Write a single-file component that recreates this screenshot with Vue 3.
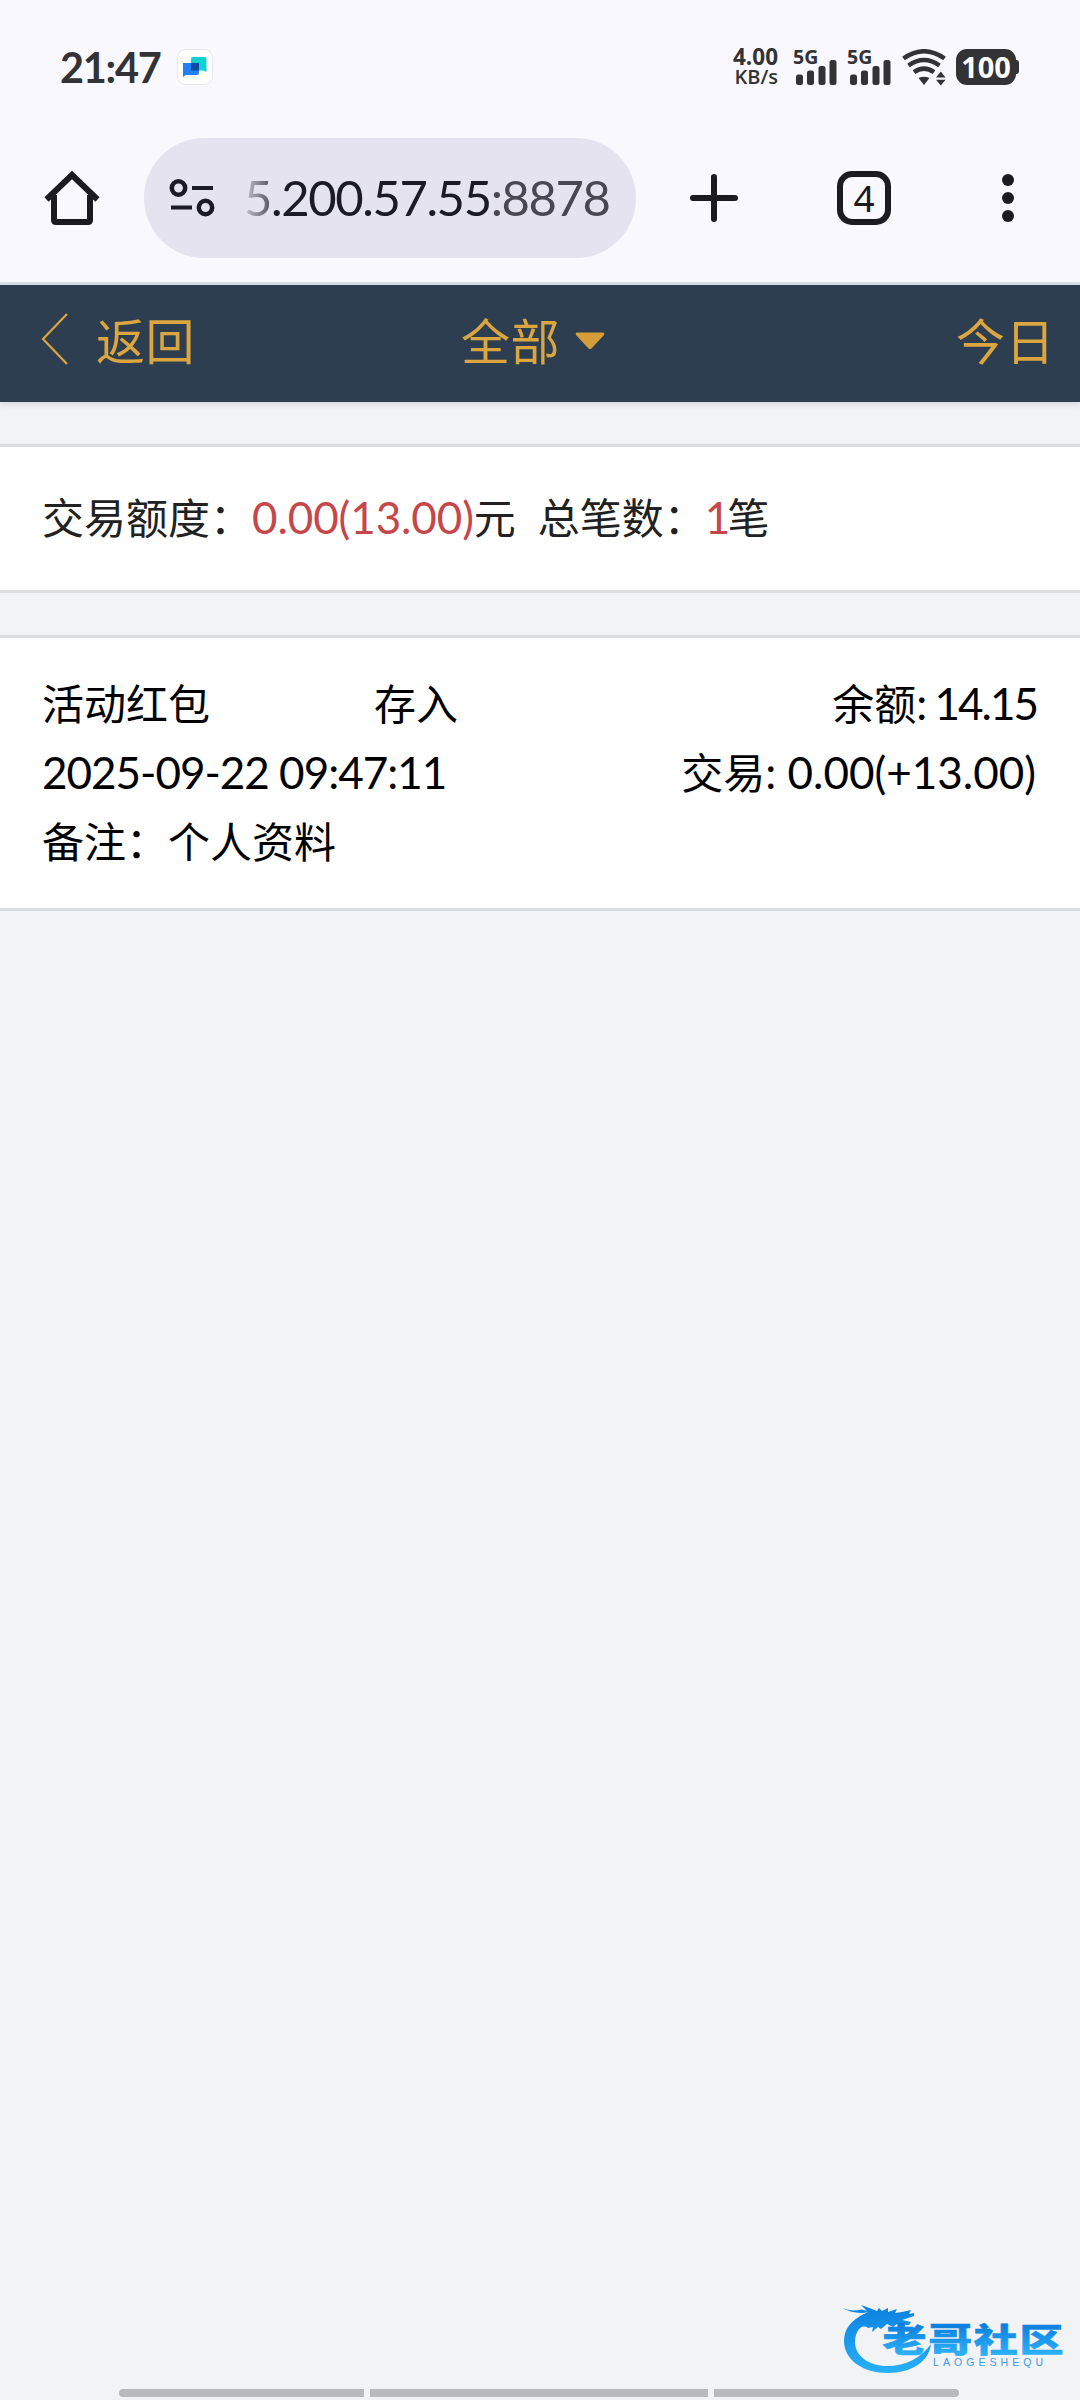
<script setup>
import { ref } from 'vue';

const signals = ['5G', '5G'];

const summary = ref({
  amount: '0.00(13.00)',
  count: 1,
});

const records = ref([
  {
    id: 1,
    type: '活动红包',
    action: '存入',
    balance: '14.15',
    time: '2025-09-22 09:47:11',
    trade: '0.00(+13.00)',
    remark: '个人资料',
  },
]);
</script>

<template>
  <div class="phone">
    <div class="status-bar">
      <span class="clock">21:47</span>
      <svg class="app-icon" width="36" height="36" viewBox="0 0 36 36">
        <rect x="0.5" y="0.5" width="35" height="35" rx="8" fill="#fff" stroke="#e6e6ec" />
        <path d="M16 8h11.500q2 0 2 2v13l-3-1.500H14V10q0-2 2-2z" fill="#12cfd0" />
        <path d="M6 14h16v10q0 2-2 2H8.500L6 28z" fill="#2080f6" />
        <path d="M14 14h8v7.500h-8z" fill="#0a4aa6" />
      </svg>
      <div class="net-speed">
        <span class="speed-num">4.00</span>
        <span class="speed-unit">KB/s</span>
      </div>
      <div v-for="(name, i) in signals" :key="i" class="signal">
        <span class="signal-name">{{ name }}</span>
        <svg class="signal-bars" width="41" height="26" viewBox="0 0 41 26" fill="#333336">
          <rect x="0" y="14.500" width="7" height="10.500" rx="2.500" />
          <rect x="11" y="10.500" width="7" height="14.500" rx="2.500" />
          <rect x="22.500" y="6" width="7" height="19" rx="2.500" />
          <rect x="33.500" y="0" width="7" height="25" rx="2.500" />
        </svg>
      </div>
      <svg class="wifi" width="45" height="37" viewBox="0 0 45 37" fill="none" stroke="#333336" stroke-width="4.500">
        <path d="M1.500 9.500Q22 -5 42.500 9.500" />
        <path d="M6.500 16.500Q22 5.500 37.500 16.500" />
        <path d="M12 23.200Q22 16 32 23.200" />
        <path d="M16.500 29Q22 26.500 27.500 29L22 36z" fill="#333336" stroke="none" />
        <path d="M34 28.500h9.500L38.800 22.500zM34 30.800h9.500L38.800 36.500z" fill="#333336" stroke="none" />
      </svg>
      <div class="battery"><span class="battery-num">100</span></div>
    </div>

    <div class="toolbar">
      <svg class="home" width="56" height="56" viewBox="0 0 56 56" fill="none" stroke="#1b1b21" stroke-width="6">
        <path d="M10 25v25q0 2 2 2h32q2 0 2-2V25" />
        <path d="M2.500 29.500L28 5l25.500 24.500" />
      </svg>
      <div class="url-box">
        <svg class="tune" width="46" height="40" viewBox="0 0 46 40" fill="none" stroke="#1b1b28">
          <circle cx="9.500" cy="10" r="6.700" stroke-width="4.500" />
          <circle cx="36.500" cy="29.500" r="6.700" stroke-width="4.500" />
          <path d="M23 10h21M2 29.500h21" stroke-width="4.200" />
        </svg>
        <div class="url"><span class="fade">5</span>.200.57.55<span class="port">:8878</span></div>
      </div>
      <svg class="plus" width="48" height="48" viewBox="0 0 48 48" stroke="#1b1b21" stroke-width="6" stroke-linecap="round">
        <path d="M24 3v42M3 24h42" />
      </svg>
      <div class="tabs">4</div>
      <svg class="more" width="12" height="48" viewBox="0 0 12 48" fill="#1b1b21">
        <circle cx="6" cy="6" r="6" />
        <circle cx="6" cy="24" r="6" />
        <circle cx="6" cy="42" r="6" />
      </svg>
    </div>

    <header class="page-header">
      <div class="back">
        <svg width="28" height="54" viewBox="0 0 28 54" fill="none" stroke="#d9a441" stroke-width="2.200">
          <path d="M26 2L2 27l24 25" />
        </svg>
        <span>返回</span>
      </div>
      <div class="title">
        <span>全部</span>
        <svg width="30" height="18" viewBox="0 0 30 18" fill="#d69c38">
          <path d="M2 0.500h26q2 0.500 1 2.500L16.500 16.500q-1.500 1.200-3 0L1 3q-1-2 1-2.500z" />
        </svg>
      </div>
      <div class="day">今日</div>
    </header>

    <section class="card summary">
      <span>交易额度：</span><span class="red num amount">{{ summary.amount }}</span><span>元</span>
      <span class="total">总笔数：</span><span class="red num count">{{ summary.count }}</span><span>笔</span>
    </section>

    <section v-for="item in records" :key="item.id" class="card record">
      <div class="row">
        <span class="type">{{ item.type }}</span>
        <span>{{ item.action }}</span>
        <span class="right">余额<span class="num balance">: {{ item.balance }}</span></span>
      </div>
      <div class="row">
        <span class="num time">{{ item.time }}</span>
        <span class="right">交易<span class="num trade">: {{ item.trade }}</span></span>
      </div>
      <div class="row">备注：{{ item.remark }}</div>
    </section>

    <svg class="watermark" width="232" height="80" viewBox="0 0 232 80">
      <defs>
        <linearGradient id="ring" x1="0" y1="0" x2="0" y2="1">
          <stop offset="0" stop-color="#0d80e0" />
          <stop offset="1" stop-color="#27b0f8" />
        </linearGradient>
        <linearGradient id="word" x1="0" y1="0" x2="0" y2="1">
          <stop offset="0.200" stop-color="#0c7cdc" />
          <stop offset="0.900" stop-color="#2cb4fa" />
        </linearGradient>
      </defs>
      <path
        fill="url(#ring)"
        d="M1 8q9 4 20 1.500l5 1.500-6-6 11 4 5 2 2-3 3 3 6-3v4l9-3-2 4 7-1 9-2-2 4 5-1v3l-12 4 9 2-2 3-12-1-4 3-6-3-6 5-3-2-6 5 1-5-5 1C20 23 14 32 14 42c0 14 14 24 32 24 19 0 34-8 44-22-2 18-20 29-43 29C22 73 3 60 3 41c0-13 8-21 20-27l4-2Q15 15 1 8z"
      />
      <text class="word" transform="translate(41.500 51.500) scale(1 0.740)" textLength="181" lengthAdjust="spacing" fill="url(#word)" stroke="url(#word)">老哥社区</text>
      <text class="pinyin" x="92" y="66" textLength="110" fill="#3b9be6">LAOGESHEQU</text>
    </svg>

    <div class="nav-hint">
      <i class="first"></i>
      <i class="middle"></i>
      <i class="last"></i>
    </div>
  </div>
</template>

<style>
body {
  background: #f2f3f5;
}
</style>

<style scoped>
.phone {
  position: relative;
  display: flex;
  flex-direction: column;
  width: 1080px;
  height: 2400px;
  overflow: hidden;
  background: #f2f3f5;
  font-family: "Noto Sans CJK SC", sans-serif;
  color: #000;
}

svg {
  display: block;
  flex: none;
}

.status-bar {
  display: flex;
  align-items: center;
  height: 134px;
  padding-left: 60px;
  background: #f9f8ff;
  color: #333336;
  box-sizing: border-box;
}

.clock {
  width: 117px;
  font-family: Lato, sans-serif;
  font-size: 41.5px;
  font-weight: 700;
  letter-spacing: -1.3px;
}

.net-speed {
  display: flex;
  flex-direction: column;
  align-items: flex-end;
  width: 565px;
  font-family: "Open Sans", sans-serif;
  font-weight: 700;
}

.speed-num {
  font-size: 22.5px;
  line-height: 20px;
}

.speed-unit {
  font-size: 20px;
  line-height: 20px;
  font-weight: 600;
}

.signal {
  display: flex;
  flex-direction: column;
  width: 41px;
  height: 36px;
  margin-left: 16px;
}

.signal + .signal {
  margin-left: 13px;
}

.signal-name {
  height: 11px;
  font-family: "Open Sans", sans-serif;
  font-size: 19.5px;
  font-weight: 700;
  line-height: 15px;
  margin-left: -1px;
}

.signal-bars {
  margin-left: 2px;
}

.wifi {
  margin-left: 13px;
}

.battery {
  display: flex;
  align-items: center;
  justify-content: center;
  width: 60px;
  height: 36px;
  margin-left: 9px;
  border-radius: 11px;
  background: #333336;
  position: relative;
}

.battery::after {
  content: "";
  position: absolute;
  right: -3px;
  top: 11px;
  width: 4px;
  height: 14px;
  border-radius: 0 3px 3px 0;
  background: #333336;
}

.battery-num {
  font-family: "Open Sans", sans-serif;
  font-size: 29px;
  font-weight: 700;
  line-height: 36px;
  color: #fff;
}

.toolbar {
  display: flex;
  align-items: center;
  height: 151px;
  padding: 0 66px 20px 44px;
  box-sizing: border-box;
  background: #f9f8ff;
  border-bottom: 3px solid #d9dde8;
  color: #1b1b21;
}

.url-box {
  display: flex;
  align-items: center;
  width: 492px;
  height: 120px;
  margin-left: 44px;
  border-radius: 60px;
  background: #e4e3ef;
}

.tune {
  margin-left: 25px;
}

.url {
  margin-left: 29px;
  padding-bottom: 2px;
  font-family: Lato, sans-serif;
  font-size: 49px;
  line-height: 60px;
  letter-spacing: -1.4px;
  white-space: nowrap;
  color: #1b1b28;
}

.fade {
  background: linear-gradient(90deg, #c4c3ce, #555460);
  -webkit-background-clip: text;
  background-clip: text;
  color: transparent;
}

.port {
  color: #484752;
}

.plus {
  margin-left: 54px;
}

.tabs {
  display: flex;
  align-items: center;
  justify-content: center;
  width: 54px;
  height: 54px;
  margin-left: 99px;
  border: 6px solid #1b1b21;
  border-radius: 15px;
  box-sizing: border-box;
  font-family: "Noto Sans", sans-serif;
  font-size: 37px;
  line-height: 42px;
}

.more {
  margin-left: auto;
}

.page-header {
  display: flex;
  align-items: center;
  height: 117px;
  padding: 0 25px 10px 41px;
  box-sizing: border-box;
  background: #2d3e50;
  box-shadow: 0 3px 6px rgba(60, 70, 130, 0.15);
  color: #dba540;
  font-size: 49px;
  letter-spacing: 0.5px;
  line-height: 60px;
}

.back {
  display: flex;
  align-items: center;
  gap: 27px;
  width: 420px;
}

.title {
  display: flex;
  align-items: center;
  gap: 15px;
}

.title svg {
  margin-top: 4px;
}

.day {
  margin-left: auto;
}

.card {
  padding: 0 42px;
  background: #fff;
  border-top: 3px solid #dcdddf;
  border-bottom: 3px solid #dcdddf;
  box-sizing: border-box;
  font-size: 42px;
}

.summary {
  display: flex;
  align-items: baseline;
  height: 149px;
  margin-top: 42px;
  line-height: 138px;
  color: #212121;
}

.num {
  font-family: Lato, sans-serif;
  font-size: 44px;
}

.amount {
  letter-spacing: -0.1px;
}

.count {
  margin: 0 -3px 0 -1px;
}

.red {
  color: #c5474a;
}

.total {
  margin-left: 22px;
}

.record {
  height: 276px;
  margin-top: 42px;
  padding-top: 29px;
}

.row {
  display: flex;
  align-items: baseline;
  height: 69px;
  line-height: 69px;
  white-space: nowrap;
}

.type {
  width: 332px;
}

.right {
  margin-left: auto;
}

.time {
  letter-spacing: -1px;
}

.balance {
  margin-right: 1px;
  letter-spacing: -2px;
}

.trade {
  margin-right: 2px;
  letter-spacing: 0;
}

.watermark {
  position: absolute;
  left: 841px;
  top: 2300px;
}

.word {
  font-family: "Noto Sans CJK SC", sans-serif;
  font-size: 44px;
  font-weight: 900;
  stroke-width: 0.8px;
}

.pinyin {
  font-family: "Liberation Sans", sans-serif;
  font-size: 10.5px;
}

.nav-hint {
  display: flex;
  gap: 6px;
  width: 840px;
  height: 8px;
  margin: auto auto 3px 119px;
}

.nav-hint i {
  width: 245px;
  background: #b9b9ba;
}

.nav-hint .middle {
  width: 338px;
}

.nav-hint .first {
  border-radius: 4px 0 0 4px;
}

.nav-hint .last {
  border-radius: 0 4px 4px 0;
}
</style>
